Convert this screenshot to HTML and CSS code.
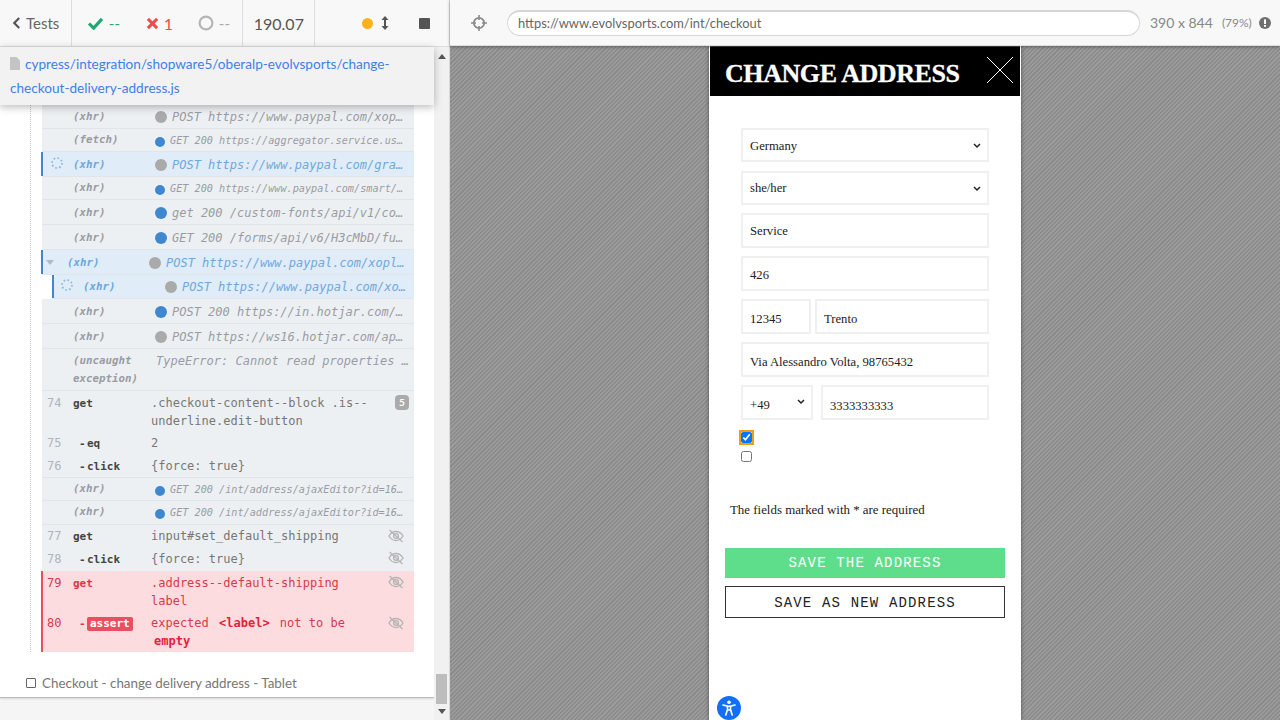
FILE: index.html
```html
<!DOCTYPE html>
<html lang="en">
<head>
<meta charset="utf-8">
<title>Cypress</title>
<link rel="stylesheet" href="styles.css">
</head>
<body>
<div class="app">
  <aside class="reporter">
    <header class="stats">
      <div class="stat tests-btn">
        <svg class="chev" viewBox="0 0 10 14" width="9" height="14"><path d="M8 1.5 2.5 7 8 12.5" fill="none" stroke="#555" stroke-width="2.4"/></svg>
        <span>Tests</span>
      </div>
      <div class="stat counts">
        <span class="count pass">
          <svg viewBox="0 0 18 14" width="17" height="13"><path d="M2 7l5 5 9-10" fill="none" stroke="#1fa971" stroke-width="3.4"/></svg>
          <span>--</span>
        </span>
        <span class="count fail">
          <svg viewBox="0 0 14 14" width="13" height="13"><path d="M2 2l10 10M12 2 2 12" fill="none" stroke="#e94f4f" stroke-width="3.2"/></svg>
          <span>1</span>
        </span>
        <span class="count pending">
          <svg viewBox="0 0 16 16" width="16" height="16"><circle cx="8" cy="8" r="6.4" fill="none" stroke="#b5b5b5" stroke-width="2.2"/></svg>
          <span>--</span>
        </span>
      </div>
      <div class="stat duration">190.07</div>
      <div class="stat controls">
        <span class="dot-amber"></span>
        <svg viewBox="0 0 8 14" width="8" height="14"><path d="M4 0 7.5 4H5v6h2.5L4 14 .5 10H3V4H.5z" fill="#555"/></svg>
        <span class="stop"></span>
      </div>
    </header>

    <div class="body">
      <main class="runnables">
        <div class="spec">
          <svg class="file" viewBox="0 0 10 13" width="10" height="13"><path d="M0 0h6.5L10 3.5V13H0z" fill="#c4c4c4"/></svg><a>cypress/integration/shopware5/oberalp-evolvsports/change-checkout-delivery-address.js</a>
        </div>
        <div class="log-wrap">
          <div class="log">
            <div class="row h24 xhr top3"><i></i><b class="nm">(xhr)</b><span class="dot grey"></span><em class="msg">POST https://www.paypal.com/xop…</em></div>
            <div class="row h23 xhr small"><i></i><b class="nm">(fetch)</b><span class="dot blue"></span><em class="msg">GET 200 https://aggregator.service.us…</em></div>
            <div class="row h25 xhr act"><i class="spin"><svg viewBox="0 0 12 12" width="12" height="12"><circle cx="6" cy="6" r="5" fill="none" stroke="#7fb2e0" stroke-width="1.6" stroke-dasharray="1.6 2.3"/></svg></i><b class="nm">(xhr)</b><span class="dot grey"></span><em class="msg">POST https://www.paypal.com/gra…</em></div>
            <div class="row h23 xhr small"><i></i><b class="nm">(xhr)</b><span class="dot blue"></span><em class="msg">GET 200 https://www.paypal.com/smart/…</em></div>
            <div class="row h25 xhr"><i></i><b class="nm">(xhr)</b><span class="dot blue"></span><em class="msg">get 200 /custom-fonts/api/v1/co…</em></div>
            <div class="row h25 xhr"><i></i><b class="nm">(xhr)</b><span class="dot blue"></span><em class="msg">GET 200 /forms/api/v6/H3cMbD/fu…</em></div>
            <div class="row h25 xhr act parent"><i class="caret"></i><b class="nm">(xhr)</b><span class="dot grey"></span><em class="msg">POST https://www.paypal.com/xopl…</em></div>
            <div class="row h24 xhr act child top3"><i class="spin"><svg viewBox="0 0 12 12" width="12" height="12"><circle cx="6" cy="6" r="5" fill="none" stroke="#7fb2e0" stroke-width="1.6" stroke-dasharray="1.6 2.3"/></svg></i><b class="nm">(xhr)</b><span class="dot grey"></span><em class="msg">POST https://www.paypal.com/xo…</em></div>
            <div class="row h25 xhr"><i></i><b class="nm">(xhr)</b><span class="dot blue"></span><em class="msg">POST 200 https://in.hotjar.com/…</em></div>
            <div class="row h25 xhr"><i></i><b class="nm">(xhr)</b><span class="dot grey"></span><em class="msg">POST https://ws16.hotjar.com/ap…</em></div>
            <div class="row h42 xhr multi"><i></i><b class="nm">(uncaught exception)</b><em class="msg">TypeError: Cannot read properties …</em></div>
            <div class="row h41 cmd nb"><i>74</i><b class="nm">get</b><span class="msg">.checkout-content--block .is--underline.edit-button</span><span class="badge">5</span></div>
            <div class="row h22 cmd nb"><i>75</i><b class="nm sub"><span class="dash">-</span>eq</b><span class="msg">2</span></div>
            <div class="row h24 cmd"><i>76</i><b class="nm sub"><span class="dash">-</span>click</b><span class="msg">{force: true}</span></div>
            <div class="row h23 xhr small"><i></i><b class="nm">(xhr)</b><span class="dot blue"></span><em class="msg">GET 200 /int/address/ajaxEditor?id=16…</em></div>
            <div class="row h24 xhr small"><i></i><b class="nm">(xhr)</b><span class="dot blue"></span><em class="msg">GET 200 /int/address/ajaxEditor?id=16…</em></div>
            <div class="row h22 cmd nb"><i>77</i><b class="nm">get</b><span class="msg">input#set_default_shipping</span><svg class="eye" viewBox="0 0 16 14"><use href="#eye"/></svg></div>
            <div class="row h24 cmd nb"><i>78</i><b class="nm sub"><span class="dash">-</span>click</b><span class="msg">{force: true}</span><svg class="eye" viewBox="0 0 16 14"><use href="#eye"/></svg></div>
            <div class="row h41 cmd err"><i>79</i><b class="nm">get</b><span class="msg">.address--default-shipping<br>label</span><svg class="eye" viewBox="0 0 16 14"><use href="#eye"/></svg></div>
            <div class="row h40 cmd err"><i>80</i><b class="nm sub"><span class="dash">-</span><span class="pill">assert</span></b><span class="msg">expected <strong>&lt;label&gt;</strong> not to be <strong class="em">empty</strong></span><svg class="eye" viewBox="0 0 16 14"><use href="#eye"/></svg></div>
          </div>
          <div class="next-test"><span class="box"></span><span>Checkout - change delivery address - Tablet</span></div>
        </div>
      </main>
      <div class="scrollbar">
        <span class="arrow up"></span>
        <span class="thumb"></span>
        <span class="arrow down"></span>
      </div>
    </div>
  </aside>

  <section class="runner">
    <header class="urlbar">
      <svg class="target" viewBox="0 0 16 16" width="16" height="16"><circle cx="8" cy="8" r="5.2" fill="none" stroke="#8a8a8a" stroke-width="1.8"/><path d="M8 0v5M8 11v5M0 8h5M11 8h5" stroke="#8a8a8a" stroke-width="1.6"/></svg>
      <div class="url">https://www.evolvsports.com/int/checkout</div>
      <div class="size">390 x 844</div>
      <div class="pct">(79%)</div>
      <svg class="info" viewBox="0 0 12 12" width="12" height="12"><circle cx="6" cy="6" r="6" fill="#6f6f6f"/><rect x="5" y="2.4" width="2" height="4.6" fill="#fff"/><rect x="5" y="8" width="2" height="1.8" fill="#fff"/></svg>
    </header>
    <div class="stage">
      <div class="phone">
        <div class="modal-head">
          <h1>CHANGE ADDRESS</h1>
          <svg class="close" viewBox="0 0 26 26" width="26" height="26"><path d="M0 0l26 26M26 0 0 26" stroke="#fff" stroke-width="1"/></svg>
        </div>
        <form class="form">
          <div class="field sel h34 low1">Germany<svg class="sv" viewBox="0 0 8 6" width="8" height="6"><use href="#chv"/></svg></div>
          <div class="field sel h34 m9">she/her<svg class="sv" viewBox="0 0 8 6" width="8" height="6"><use href="#chv"/></svg></div>
          <div class="field h35 m8">Service</div>
          <div class="field h35 m8 low1">426</div>
          <div class="pair m8 zip">
            <div class="field h35 low2">12345</div>
            <div class="field h35 low2">Trento</div>
          </div>
          <div class="field h35 m8 low2">Via Alessandro Volta, 98765432</div>
          <div class="pair m8 tel">
            <div class="field sel h35 low2">+49<svg class="sv" viewBox="0 0 8 6" width="8" height="6"><use href="#chv"/></svg></div>
            <div class="field h35 low3">3333333333</div>
          </div>
          <input class="check focus" type="checkbox" checked>
          <input class="check plain" type="checkbox">
        </form>
        <p class="req">The fields marked with * are required</p>
        <div class="actions">
          <div class="btn save">SAVE THE ADDRESS</div>
          <div class="btn new">SAVE AS NEW ADDRESS</div>
        </div>
        <div class="a11y">
          <svg viewBox="0 0 24 24" width="24" height="24"><circle cx="12" cy="12" r="12" fill="#146ff8"/><circle cx="12" cy="6.2" r="1.8" fill="#fff"/><path d="M6 9l4.5 1.2v3.4L8.8 19M18 9l-4.5 1.2v3.4l1.7 5.4M10.5 10.2h3M10.5 14h3" fill="none" stroke="#fff" stroke-width="1.6" stroke-linecap="round"/></svg>
        </div>
      </div>
    </div>
  </section>
</div>
<svg class="defs" width="0" height="0">
  <defs>
    <g id="eye" fill="none" stroke="#b4b4b4" stroke-width="1.3"><path d="M1 7s2.6-4.5 7-4.5S15 7 15 7s-2.6 4.5-7 4.5S1 7 1 7z"/><circle cx="8" cy="7" r="2.4"/><path d="M1.5 1l13 12"/></g>
    <path id="chv" d="M1 1l3 3 3-3" fill="none" stroke="#222" stroke-width="1.5"/>
  </defs>
</svg>
</body>
</html>
```
FILE: styles.css
```css
* { box-sizing: border-box; }
html, body { margin: 0; height: 100%; overflow: hidden; }
body { font-family: Lato, "Open Sans", sans-serif; color: #555; background: #fff; }
.defs { position: absolute; }
.app { display: flex; width: 1280px; height: 720px; }

.reporter { width: 450px; display: flex; flex-direction: column; background: #f5f5f5; border-right: 1px solid #d9d9d9; }
.stats { height: 47px; display: flex; background: #f8f8f8; border-bottom: 1px solid #ddd; font-size: 15px; }
.stat { display: flex; align-items: center; border-right: 1px solid #ddd; height: 46px; }
.tests-btn { width: 72px; padding-left: 12px; gap: 5px; color: #666; }
.counts { width: 172px; padding-left: 15px; }
.count { display: flex; align-items: center; gap: 5px; }
.pass { width: 59px; color: #1fa971; }
.fail { width: 52px; color: #e94f4f; font-size: 16px; }
.pending { color: #aaa; }
.duration { width: 72px; justify-content: center; font-size: 16px; color: #555; }
.controls { width: 134px; border-right: 0; padding-left: 47px; gap: 8px; }
.dot-amber { width: 11px; height: 11px; border-radius: 50%; background: #fdb11f; }
.stop { width: 11px; height: 11px; background: #555; border-radius: 1px; margin-left: 22px; }

.body { flex: 1; display: flex; min-height: 0; }
.runnables { width: 434px; display: flex; flex-direction: column; background: #f5f5f5; }
.spec { position: relative; z-index: 2; height: 58px; padding: 5px 20px 0 10px; background: #f2f2f2; box-shadow: 0 2px 8px rgba(0,0,0,.28); font-size: 13.6px; line-height: 24px; }
.spec a { color: #3f80ea; }
.file { margin-right: 5px; vertical-align: -1px; }
.log-wrap { flex: none; height: 593px; background: #fff; border-bottom: 1px solid #bbb; box-shadow: 0 1px 2px rgba(0,0,0,.12); }
.log { margin-left: 30px; width: 384px; padding-left: 11px; border-left: 1px dotted #c6c6c6; }
.row { display: flex; align-items: flex-start; position: relative; background: #edf0f3; border-bottom: 1px solid #e1e4e8; font-family: "DejaVu Sans Mono", monospace; font-size: 12px; line-height: 18px; color: #777; padding-top: 3px; }
.nb { border-bottom: 0; }
.row > i { flex: 0 0 31px; font-style: normal; color: #aeb4bd; padding-left: 5px; }
.nm { flex: 0 0 78px; font-size: 11px; color: #444; }
.cmd .nm { padding-top: 1px; }
.xhr { padding-top: 4px; }
.xhr.top3 { padding-top: 3px; }
.xhr .nm { font-style: italic; color: #9a9ca3; font-size: 10.8px; }
.msg { flex: 1; min-width: 0; color: #777; }
em.msg { color: #9a9ca3; white-space: nowrap; overflow: hidden; }
.small em.msg { font-size: 10.2px; margin-top: -1px; }
.small .nm { margin-top: -2px; }
.dot { flex: 0 0 12px; width: 12px; height: 12px; border-radius: 50%; margin: 3px 5px 0 4px; }
.small .dot { flex-basis: 10px; width: 10px; height: 10px; margin: 4px 5px 0 4px; }
.grey { background: #aaa; }
.blue { background: #3f88d0; }
.multi { padding-top: 3px; }
.multi .msg { margin-left: 5px; }
.act { background: #e0ecf7; }
.act::before { content: ""; position: absolute; left: -1px; top: 0; bottom: 0; width: 2px; background: #3f88d0; }
.act .nm, .act em.msg { color: #6fa8dc; }
.row > .spin { display: flex; padding-left: 9px; padding-top: 1px; }
.row > .caret { flex-basis: 25px; padding-left: 4px; }
.caret::after { content: ""; display: block; margin-top: 6px; width: 0; height: 0; border: 4px solid transparent; border-top: 5px solid #b4b8c6; border-bottom: 0; }
.child { margin-left: 10px; box-shadow: -10px 0 0 #fff; }
.child::before { left: 0; }
.sub { padding-left: 6px; }
.dash { display: inline-block; width: 8px; }
.badge { position: absolute; right: 5px; top: 4px; width: 14px; height: 15px; border-radius: 4px; background: #aaa; color: #fff; font: 700 10px/15px Lato, sans-serif; text-align: center; }
.eye { position: absolute; right: 10px; top: 4px; width: 16px; height: 14px; }
.cmd .msg { margin-right: 33px; }
.h22 { height: 22px; padding-top: 2px; } .h23 { height: 23px; } .h24 { height: 24px; } .h25 { height: 25px; }
.h40 { height: 40px; padding-top: 2px; } .h41 { height: 41px; } .h42 { height: 42px; }
.err { background: #fddcdf; color: #d5394a; border-bottom: 0; }
.err::before { content: ""; position: absolute; left: -1px; top: 0; bottom: 0; width: 2px; background: #e94f5f; }
.err > i, .err .nm, .err .msg { color: #d5394a; }
.err strong { color: #e0233a; padding: 0 3px; }
.err strong.em { display: inline-block; padding-left: 3px; }
.err .pill { display: inline-block; background: #ea4f60; color: #fff; border-radius: 2px; padding: 0 3px; line-height: 14px; }
.next-test { display: flex; align-items: center; gap: 6px; height: 45px; padding: 17px 0 0 26px; font-size: 13.4px; color: #777; background: #fff; }
.box { width: 10px; height: 10px; border: 1px solid #666; border-radius: 1px; }

.scrollbar { position: relative; flex: 1; background: #f1f1f1; display: flex; flex-direction: column; align-items: center; }
.thumb { width: 11px; height: 30px; background: #bdbdbd; margin-top: 627px; }
.arrow { position: absolute; left: 4px; width: 0; height: 0; border: 4px solid transparent; }
.arrow.up { top: 7px; border-bottom: 5px solid #555; border-top: 0; z-index: 3; }
.arrow.down { bottom: 6px; border-top: 5px solid #555; border-bottom: 0; }

.runner { flex: 1; display: flex; flex-direction: column; min-width: 0; }
.urlbar { position: relative; z-index: 2; height: 46px; display: flex; align-items: center; background: #f8f8f8; border-bottom: 1px solid #ddd; padding-left: 21px; box-shadow: 0 1px 3px rgba(0,0,0,.35); }
.target { margin-right: 20px; }
.url { width: 633px; height: 26px; border: 1px solid #d6d6d6; border-top-width: 2px; border-radius: 13px; background: #fff; padding-left: 10px; font-size: 12.9px; line-height: 23px; color: #666; }
.size { margin-left: 10px; font-size: 14px; color: #888; }
.pct { margin-left: 9px; font-size: 12px; color: #888; }
.info { margin-left: 7px; }

.stage { flex: 1; min-height: 0; display: flex; justify-content: center; background: repeating-linear-gradient(-45deg, #8b8b8b 0 1.5px, #9c9c9c 1.5px 3px); }
.phone { position: relative; width: 312px; height: 674px; background: #fff; box-shadow: 0 0 4px rgba(0,0,0,.45); }
.modal-head { height: 50px; margin: 0 1px; background: #000; display: flex; align-items: center; justify-content: space-between; padding: 1px 7px 0 15px; border-top: 1px solid #444; }
.modal-head h1 { margin: 4px 0 0; color: #fff; font: 700 26px/1 "Liberation Serif", serif; letter-spacing: -.43px; -webkit-text-stroke: .3px #fff; }
.close { margin-top: -5px; }
.form { padding: 32px 32px 0 32px; }
.field { position: relative; border: 2px solid #f0f0f0; padding: 1px 0 0 7px; display: flex; align-items: center; font: 12.65px "Liberation Serif", serif; color: #222; }
.low1 { padding-top: 3px; }
.low2 { padding-top: 5px; }
.low3 { padding-top: 7px; }
.h34 { height: 34px; } .h35 { height: 35px; }
.m9 { margin-top: 9px; } .m8 { margin-top: 8px; }
.sv { position: absolute; right: 6px; top: 13px; }
.tel .sv { top: 12px; }
.pair { display: flex; }
.zip .field:first-child { width: 70px; margin-right: 4px; }
.zip .field:last-child { flex: 1; }
.tel .field:first-child { width: 72px; margin-right: 8px; }
.tel .field:last-child { flex: 1; }
.check { display: block; width: 11px; height: 11px; margin: 0; }
.check.focus { margin-top: 12px; outline: 2px solid #f39c12; border-radius: 2px; }
.check.plain { margin-top: 8px; }
.req { margin: 41px 0 0 21px; font: 12.9px/14px "Liberation Serif", serif; color: #222; }
.actions { padding: 31px 16px 0; display: flex; flex-direction: column; gap: 8px; }
.btn { display: flex; align-items: center; justify-content: center; font: 14px "Liberation Mono", monospace; letter-spacing: 1.16px; }
.save { height: 30px; background: #5ede8b; color: #fff; }
.new { height: 32px; padding-top: 1px; border: 1px solid #333; color: #222; }
.a11y { position: absolute; left: 8px; top: 650px; width: 24px; height: 24px; }
```
